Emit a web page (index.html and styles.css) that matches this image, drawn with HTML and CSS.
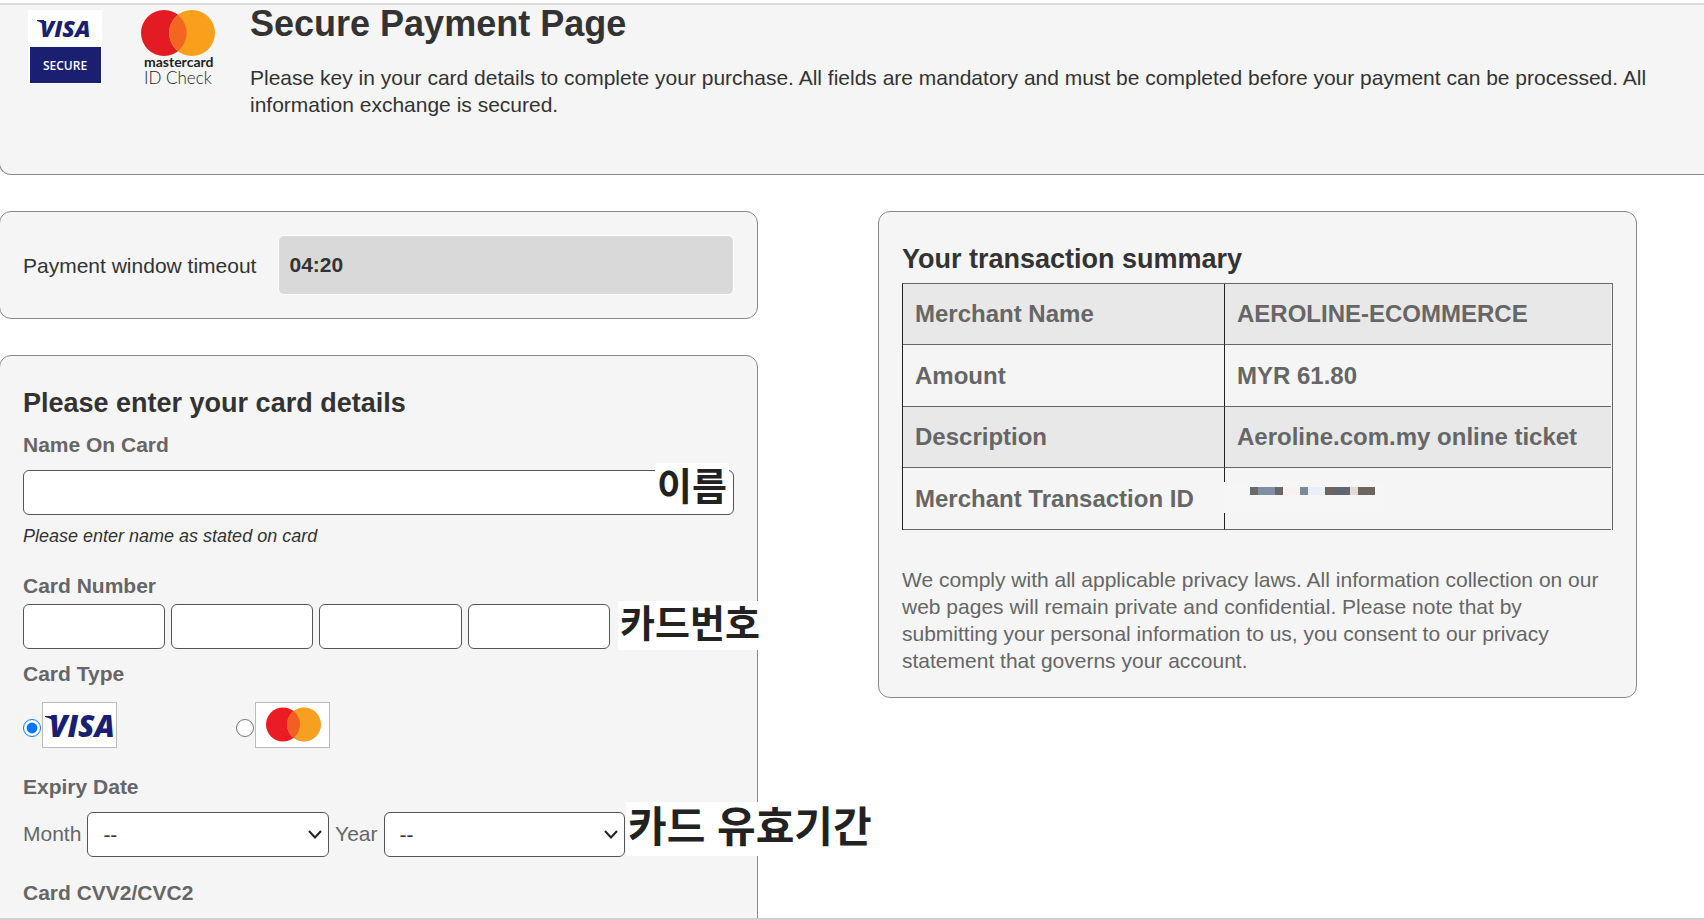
FILE: index.html
```
<!DOCTYPE html>
<html lang="en">
<head>
  <meta charset="UTF-8">
  <meta name="viewport" content="width=device-width, initial-scale=1.0">
  <title>Secure Payment Page</title>
  <link rel="stylesheet" href="styles.css">
</head>
<body>
  <div class="page">
    <header class="header">
      <svg class="visa-secure" width="74" height="74" viewBox="0 0 74 74" role="img" aria-label="Visa Secure">
        <rect width="74" height="74" fill="#fff"/>
        <rect x="2" y="37" width="71" height="36" fill="#1a1f71"/>
        <path d="M9 10H16L17 17Q14 12 9 11Z" fill="#1a1f71"/>
        <text class="visa-text" x="12" y="27" font-size="23">VISA</text>
        <text class="secure-text" x="37" y="60" text-anchor="middle">SECURE</text>
      </svg>
      <svg class="mc-check" width="80" height="84" viewBox="0 0 80 84" role="img" aria-label="Mastercard ID Check">
        <circle cx="23" cy="23" r="23" fill="#e31b23"/>
        <circle cx="51" cy="23" r="23" fill="#f99f1b"/>
        <path d="M37 5A23 23 0 0 1 37 41A23 23 0 0 1 37 5Z" fill="#f26522"/>
        <text class="mc-name" x="3" y="57">mastercard</text>
        <text class="mc-id" x="3" y="74">ID Check</text>
      </svg>
      <div class="intro">
        <h1>Secure Payment Page</h1>
        <p>Please key in your card details to complete your purchase. All fields are mandatory and must be completed before your payment can be processed. All information exchange is secured.</p>
      </div>
    </header>

    <main class="columns">
      <div class="left">
        <section class="card timeout">
          <span>Payment window timeout</span>
          <div class="timer">04:20</div>
        </section>

        <form class="card details">
          <h2>Please enter your card details</h2>

          <label class="title" for="name">Name On Card</label>
          <div class="name-row">
            <input type="text" id="name">
            <span class="note note-name" lang="ko">이름</span>
          </div>
          <p class="hint">Please enter name as stated on card</p>

          <label class="title" for="number1">Card Number</label>
          <div class="number-row">
            <input type="text" id="number1" maxlength="4">
            <input type="text" maxlength="4" aria-label="Card number, second part">
            <input type="text" maxlength="4" aria-label="Card number, third part">
            <input type="text" maxlength="4" aria-label="Card number, fourth part">
            <span class="note note-number" lang="ko">카드번호</span>
          </div>

          <div class="title">Card Type</div>
          <div class="type-row">
            <div class="type">
              <input type="radio" name="type" id="visa" checked>
              <label for="visa">
                <svg width="75" height="46" viewBox="0 0 75 46" role="img" aria-label="Visa">
                  <rect x="0.5" y="0.5" width="74" height="45" fill="#fff" stroke="#bbb"/>
                  <path d="M3 14H13L14 23Q10 16 3 15Z" fill="#1a1f71"/>
                  <text class="visa-text" x="7" y="35" font-size="30">VISA</text>
                </svg>
              </label>
            </div>
            <div class="type">
              <input type="radio" name="type" id="mastercard">
              <label for="mastercard">
                <svg width="75" height="46" viewBox="0 0 75 46" role="img" aria-label="Mastercard">
                  <rect x="0.5" y="0.5" width="74" height="45" fill="#fff" stroke="#bbb"/>
                  <circle cx="28" cy="22.5" r="17" fill="#eb1c26"/>
                  <circle cx="49" cy="22.5" r="17" fill="#f79f1f"/>
                  <path d="M38.5 9.1A17 17 0 0 1 38.5 35.9A17 17 0 0 1 38.5 9.1Z" fill="#f16022"/>
                </svg>
              </label>
            </div>
          </div>

          <div class="title">Expiry Date</div>
          <div class="expiry-row">
            <label for="month">Month</label>
            <div class="select">
              <select id="month"><option>--</option></select>
              <svg width="14" height="9" viewBox="0 0 14 9" aria-hidden="true"><path d="M1 1L7 7.5L13 1" fill="none" stroke="#222" stroke-width="2"/></svg>
            </div>
            <label for="year">Year</label>
            <div class="select">
              <select id="year"><option>--</option></select>
              <svg width="14" height="9" viewBox="0 0 14 9" aria-hidden="true"><path d="M1 1L7 7.5L13 1" fill="none" stroke="#222" stroke-width="2"/></svg>
            </div>
            <span class="note note-expiry" lang="ko">카드 유효기간</span>
          </div>

          <label class="title" for="cvv">Card CVV2/CVC2</label>
          <div class="cvv-row">
            <input type="text" id="cvv" maxlength="3">
          </div>
        </form>
      </div>

      <section class="card summary">
        <h2>Your transaction summary</h2>
        <table>
          <tr>
            <th>Merchant Name</th>
            <td>AEROLINE-ECOMMERCE</td>
          </tr>
          <tr>
            <th>Amount</th>
            <td>MYR 61.80</td>
          </tr>
          <tr>
            <th>Description</th>
            <td>Aeroline.com.my online ticket</td>
          </tr>
          <tr>
            <th>Merchant Transaction ID</th>
            <td>
              <!-- hidden id -->
              <svg class="mosaic" width="160" height="31" viewBox="0 0 160 31" aria-hidden="true">
                <rect width="160" height="31" fill="#f6f6f6"/>
                <rect x="26" y="5" width="8" height="8" fill="#6a696b"/>
                <rect x="34" y="5" width="17" height="8" fill="#7f8ea1"/>
                <rect x="51" y="5" width="8" height="8" fill="#666768"/>
                <rect x="59" y="5" width="17" height="8" fill="#f9f3ef"/>
                <rect x="76" y="5" width="8" height="8" fill="#7b8a99"/>
                <rect x="84" y="5" width="17" height="8" fill="#e7f0f9"/>
                <rect x="101" y="5" width="8" height="8" fill="#70625f"/>
                <rect x="109" y="5" width="17" height="8" fill="#60656e"/>
                <rect x="126" y="5" width="8" height="8" fill="#e3dbd0"/>
                <rect x="134" y="5" width="17" height="8" fill="#6b665f"/>
              </svg>
            </td>
          </tr>
        </table>
        <p>We comply with all applicable privacy laws. All information collection on our web pages will remain private and confidential. Please note that by submitting your personal information to us, you consent to our privacy statement that governs your account.</p>
      </section>
    </main>
  </div>
</body>
</html>
```
FILE: styles.css
```
* {
  box-sizing: border-box;
}
body {
  margin: 0;
  padding-top: 3px;
  height: 100vh;
  background: #fff;
  color: #333;
  font-family: "Liberation Sans", Arial, sans-serif;
  font-size: 21px;
  line-height: 27px;
}
.page {
  height: 100%;
  overflow-x: hidden;
  overflow-y: auto;
  scrollbar-width: none;
  border-top: 2px solid #dcdcdc;
  border-bottom: 2px solid #d0d0d0;
}
h1, h2, p {
  margin: 0;
}
h1 {
  font-size: 36px;
  line-height: 38px;
  margin-bottom: 21px;
}
h2 {
  font-size: 27px;
  line-height: 32px;
  margin: 8px 0;
}

/* header */
.header {
  display: flex;
  align-items: flex-start;
  margin-left: -1px;
  padding: 0 50px 56px 28px;
  background: #f5f5f5;
  border: 1px solid #888;
  border-width: 0 0 1px 1px;
  border-radius: 0 0 0 12px;
}
.visa-secure {
  flex: none;
  margin-top: 5px;
}
.mc-check {
  flex: none;
  margin: 5px 29px 0 39px;
}
.intro {
  flex: 1;
}
.visa-text {
  font-family: "Open Sans", sans-serif;
  font-weight: 800;
  font-style: italic;
  fill: #1a1f71;
}
.secure-text {
  font-family: "Open Sans", sans-serif;
  font-size: 12px;
  font-weight: 600;
  fill: #fff;
}
.mc-name {
  font-family: Lato, sans-serif;
  font-size: 14px;
  font-weight: 700;
  fill: #222;
}
.mc-id {
  font-family: Lato, sans-serif;
  font-size: 17px;
  font-weight: 300;
  fill: #222;
}

/* layout */
.columns {
  display: grid;
  grid-template-columns: 1fr 1fr;
  gap: 120px;
  align-items: start;
  margin: 36px 67px 0 -1px;
}
.card {
  padding: 23px;
  background: #f5f5f5;
  border: 1px solid #888;
  border-radius: 12px;
}

/* timeout */
.timeout {
  display: flex;
  align-items: center;
  gap: 22px;
  margin-bottom: 36px;
}
.timer {
  flex: 1;
  height: 60px;
  padding-left: 10px;
  line-height: 58px;
  font-weight: bold;
  background: #d9d9d9;
  border: 1px solid #fff;
  border-radius: 6px;
}

/* card details */
.details {
  color: #666;
}
.details h2 {
  margin-bottom: 12px;
  color: #333;
}
.title {
  display: block;
  font-weight: bold;
}
input[type="text"], select {
  height: 45px;
  background: #fff;
  border: 1px solid #555;
  border-radius: 6px;
  font: inherit;
  color: #333;
}
.name-row {
  position: relative;
  margin: 12px 0 9px;
}
.name-row input {
  display: block;
  width: 100%;
}
.hint {
  margin-bottom: 24px;
  font-size: 18px;
  line-height: 24px;
  font-style: italic;
  color: #333;
}
.number-row {
  display: flex;
  gap: 6px;
  position: relative;
  margin: 5px 0 11px;
}
.number-row input {
  width: 20%;
}
.type-row {
  display: flex;
  margin: 15px 0 25px;
}
.type {
  display: flex;
  align-items: center;
  width: 30%;
}
.type input {
  width: 18px;
  height: 18px;
  margin: 6px 1px 0 0;
}
.type svg {
  display: block;
}
.expiry-row {
  display: flex;
  align-items: center;
  gap: 6px;
  position: relative;
  margin: 12px 0 22px;
}
.expiry-row > label {
  padding-bottom: 3px;
}
.select {
  position: relative;
  width: 34%;
}
.select select {
  display: block;
  width: 100%;
  padding: 0 30px 0 15px;
  appearance: none;
}
.select svg {
  position: absolute;
  top: 18px;
  right: 7px;
  pointer-events: none;
}
.cvv-row {
  margin-top: 12px;
}

/* korean notes over the fields */
.note {
  position: absolute;
  padding: 0 2px 10px;
  background: #fff;
  color: #222;
  font-family: "Noto Sans CJK KR", sans-serif;
  font-weight: bold;
  white-space: nowrap;
}
.note-name {
  top: -7px;
  right: 5px;
  font-size: 38px;
  line-height: 41px;
}
.note-number {
  top: -3px;
  left: 595px;
  font-size: 38px;
  line-height: 39px;
}
.note-expiry {
  top: -10px;
  left: 603px;
  font-size: 42px;
  line-height: 44px;
}

/* summary */
.summary {
  color: #666;
}
.summary h2 {
  color: #333;
}
.summary table {
  width: 100%;
  margin: 8px 0 36px;
  padding-right: 1px;
  border: 1px solid #666;
  border-bottom: 0;
  border-left-color: #222;
  border-spacing: 0;
  font-size: 24px;
  line-height: 28px;
}
.summary th, .summary td {
  position: relative;
  padding: 16px 12px;
  border-bottom: 1px solid #666;
  font-weight: bold;
  text-align: left;
}
.summary th {
  width: 322px;
  border-right: 1px solid #222;
}
.summary tr:nth-child(odd) {
  background: #e8e8e8;
}
.summary tr:nth-child(even) > * {
  padding-top: 17px;
}
.mosaic {
  position: absolute;
  top: 14px;
  left: -1px;
}
```
